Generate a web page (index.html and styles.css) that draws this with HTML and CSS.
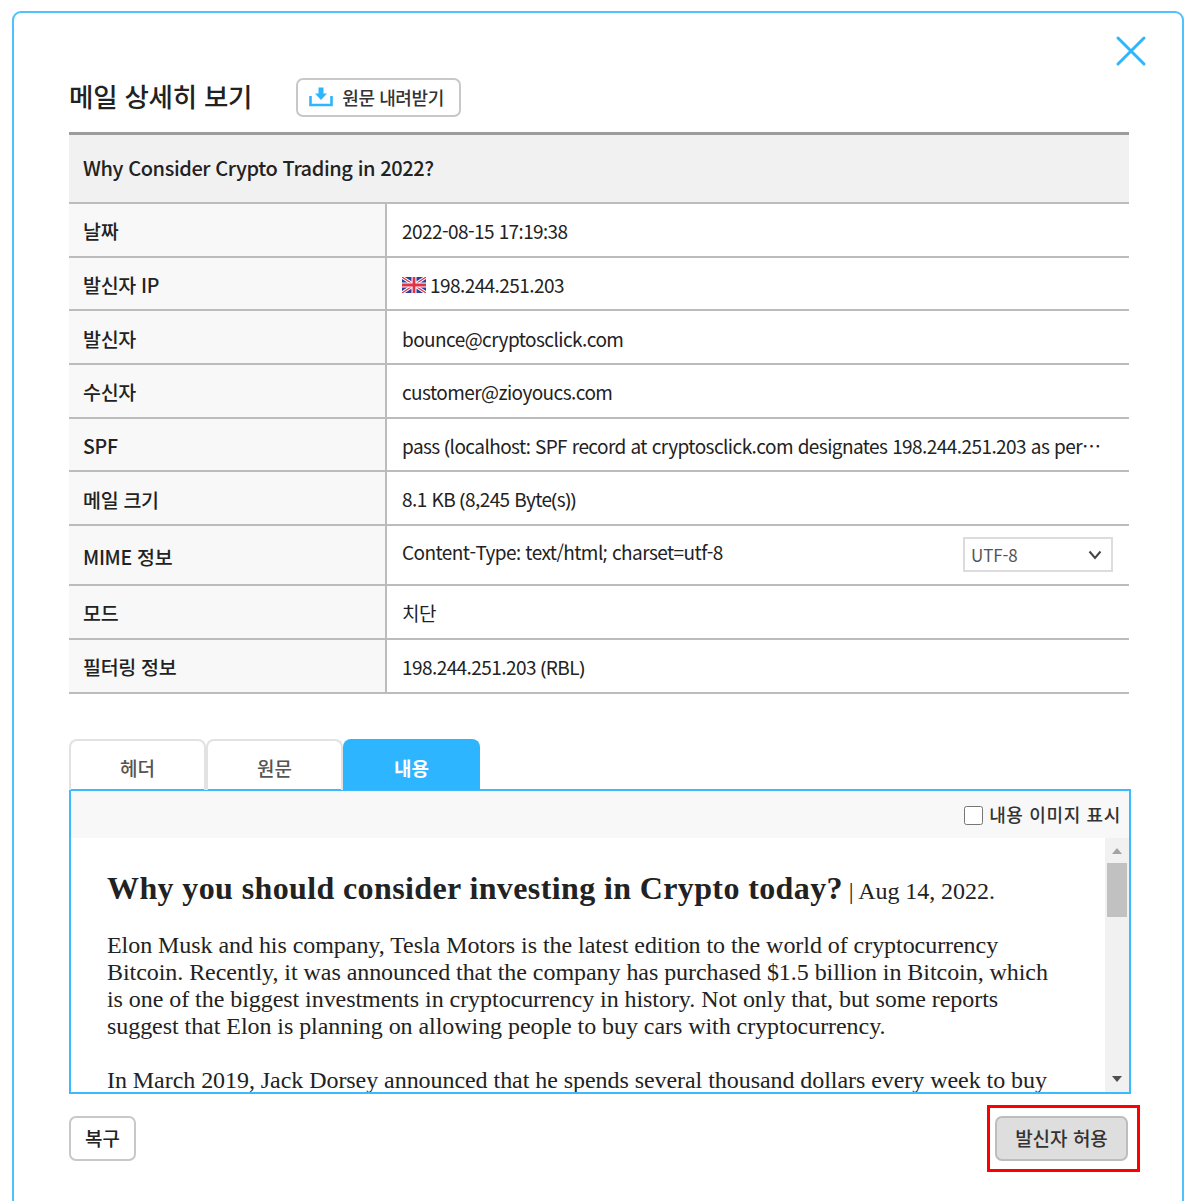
FILE: index.html
```html
<!DOCTYPE html>
<html lang="ko">
<head>
<meta charset="utf-8">
<title>메일 상세히 보기</title>
<link rel="stylesheet" href="styles.css">
</head>
<body>
<div class="dialog">
  <button class="close" aria-label="닫기">
    <svg width="32" height="32" viewBox="0 0 32 32"><path d="M3 3 L29 29 M29 3 L3 29" fill="none" stroke="#2db5ff" stroke-width="3" stroke-linecap="round"/></svg>
  </button>
  <div class="head">
    <h1 class="title">메일 상세히 보기</h1>
    <button class="btn-down">
      <svg width="24" height="20" viewBox="0 0 24 20"><path d="M1.500 9 V18 H22.500 V9" fill="none" stroke="#2db5ff" stroke-width="2.600"/><path d="M9.500 0.500 H14.500 V6.500 H18 L12 13 L6 6.500 H9.500 Z" fill="#2db5ff"/></svg>
      <span>원문 내려받기</span>
    </button>
  </div>
  <div class="info">
    <div class="subject">Why Consider Crypto Trading in 2022?</div>
    <div class="row"><div class="lab">날짜</div><div class="val"><span>2022-08-15 17<span class="pn">:</span>19<span class="pn">:</span>38</span></div></div>
    <div class="row"><div class="lab">발신자 IP</div><div class="val">
      <svg class="flag" width="24" height="16" viewBox="0 0 24 16"><rect width="24" height="16" fill="#2b3f9c"/><path d="M0 0 L24 16 M24 0 L0 16" stroke="#fff" stroke-width="3.200"/><path d="M0 0 L24 16 M24 0 L0 16" stroke="#e0334a" stroke-width="1.200"/><path d="M12 0 V16 M0 8 H24" stroke="#fff" stroke-width="5"/><path d="M12 0 V16 M0 8 H24" stroke="#e0334a" stroke-width="2.800"/></svg>
      198.244.251.203</div></div>
    <div class="row"><div class="lab">발신자</div><div class="val">bounce@cryptosclick.com</div></div>
    <div class="row"><div class="lab">수신자</div><div class="val">customer@zioyoucs.com</div></div>
    <div class="row"><div class="lab">SPF</div><div class="val"><span>pass <span class="pn">(</span>localhost<span class="pn">:</span> SPF record at cryptosclick.com designates 198.244.251.203 as per…</span></div></div>
    <div class="row"><div class="lab">메일 크기</div><div class="val"><span>8.1 KB <span class="pn">(</span>8,245 Byte<span class="pn">(</span>s<span class="pn">))</span></span></div></div>
    <div class="row row-mime"><div class="lab">MIME 정보</div><div class="val val-mime"><span class="mime-text">Content-Type<span class="pn">:</span> text/html<span class="pn">;</span> charset=utf-8</span>
      <div class="select"><span>UTF-8</span><svg width="14" height="10" viewBox="0 0 14 10"><path d="M1.500 1.500 L7 8 L12.500 1.500" fill="none" stroke="#444" stroke-width="2"/></svg></div></div></div>
    <div class="row"><div class="lab">모드</div><div class="val">치단</div></div>
    <div class="row"><div class="lab">필터링 정보</div><div class="val"><span>198.244.251.203 <span class="pn">(</span>RBL<span class="pn">)</span></span></div></div>
  </div>
  <div class="tabs">
    <div class="tab">헤더</div>
    <div class="tab">원문</div>
    <div class="tab tab-on">내용</div>
  </div>
  <div class="panel">
    <div class="panel-bar"><label class="chk"><input type="checkbox"><span>내용 이미지 표시</span></label></div>
    <div class="panel-body">
      <div class="mail">
        <p class="mail-head"><strong>Why you should consider investing in Crypto today?</strong> | Aug 14, 2022.</p>
        <p class="mail-p">Elon Musk and his company, Tesla Motors is the latest edition to the world of cryptocurrency<br>Bitcoin. Recently, it was announced that the company has purchased $1.5 billion in Bitcoin, which<br>is one of the biggest investments in cryptocurrency in history. Not only that, but some reports<br>suggest that Elon is planning on allowing people to buy cars with cryptocurrency.</p>
        <p class="mail-p">In March 2019, Jack Dorsey announced that he spends several thousand dollars every week to buy</p>
      </div>
      <div class="sbar">
        <svg width="12" height="8" viewBox="0 0 12 8"><path d="M1 7 L6 1 L11 7 Z" fill="#a3a3a3"/></svg>
        <div class="sthumb"></div>
        <svg class="sdown" width="12" height="8" viewBox="0 0 12 8"><path d="M1 1 L6 7 L11 1 Z" fill="#505050"/></svg>
      </div>
    </div>
  </div>
  <div class="foot">
    <button class="btn-restore"><span>복구</span></button>
    <div class="mark"><button class="btn-allow"><span>발신자 허용</span></button></div>
  </div>
</div>
</body>
</html>
```
FILE: styles.css
```css
html, body { margin: 0; padding: 0; height: 1201px; overflow: hidden; background: #fff; }
body { font-family: "Noto Sans CJK KR", "Noto Sans", sans-serif; color: #222; }
* { box-sizing: border-box; }
.dialog { position: relative; width: 1172px; height: 1230px; margin: 11px 0 0 12px; border: 2px solid #4fc1ff; border-radius: 9px; padding: 64px 53px 0 55px; background: #fff; }
.close { position: absolute; top: 22px; right: 35px; width: 32px; height: 32px; padding: 0; border: 0; background: none; }
.close svg { display: block; }
.head { display: flex; align-items: center; gap: 44px; height: 40px; margin-bottom: 15px; }
.title { margin: 0 0 2px; font-size: 26.500px; font-weight: 500; letter-spacing: -0.25px; color: #222; line-height: 38px; }
.btn-down { display: flex; align-items: center; gap: 9px; width: 165px; height: 39px; padding: 0 0 1px 11px; border: 2px solid #c8c8c8; border-radius: 7px; background: #fff; font: 500 18px "Noto Sans CJK KR", sans-serif; letter-spacing: -0.4px; color: #333; }
.info { width: 1060px; border-top: 3px solid #9c9c9c; }
.subject { height: 69px; display: flex; align-items: center; padding: 0 14px 2px; background: #f1f1f1; border-bottom: 2px solid #bcbcbc; font-size: 20px; font-weight: 500; letter-spacing: -0.4px; }
.row { display: flex; height: 53.700px; border-bottom: 2px solid #bcbcbc; font-size: 19px; }
.row-mime { height: 60px; }
.lab { width: 318px; flex: none; display: flex; align-items: center; padding: 2px 14px 0; background: #f8f8f8; border-right: 2px solid #bcbcbc; font-size: 19.500px; font-weight: 500; letter-spacing: -0.3px; }
.val { flex: 1; min-width: 0; display: flex; align-items: center; padding: 2px 16px 0 15px; font-family: "Noto Sans CJK JP", "Noto Sans CJK KR", sans-serif; letter-spacing: -0.57px; white-space: nowrap; }
.pn { font-family: "Noto Sans", sans-serif; }
.val-mime { justify-content: space-between; }
.mime-text { margin-top: -9px; }
.flag { margin-right: 4px; flex: none; }
.select { display: flex; align-items: center; justify-content: space-between; width: 150px; height: 35px; margin-top: -3px; padding: 0 9px 0 6px; border: 2px solid #dcdcdc; font-size: 17px; letter-spacing: -0.1px; color: #555; }
.tabs { display: flex; margin-top: 45px; height: 51px; }
.tab { width: 137px; height: 51px; display: flex; align-items: center; justify-content: center; padding-top: 5px; border: 2px solid #e2e2e2; border-bottom: 0; border-radius: 8px 8px 0 0; font-size: 19px; font-weight: 500; color: #555; }
.tab-on { background: #2db5ff; border-color: #2db5ff; color: #fff; font-weight: 700; }
.panel { width: 1062px; height: 305px; border: 2px solid #3db9ff; margin-top: -1px; display: flex; flex-direction: column; }
.panel-bar { height: 47px; background: #f8f8f8; display: flex; justify-content: flex-end; align-items: center; padding-right: 8px; }
.chk { display: flex; align-items: center; gap: 6px; font-size: 18px; font-weight: 500; letter-spacing: 0.65px; color: #333; }
.chk input { width: 19px; height: 19px; margin: 3px 0 0; }
.panel-body { flex: 1; min-height: 0; display: flex; overflow: hidden; }
.mail { flex: 1; min-width: 0; overflow: hidden; padding: 29px 0 0 36px; font-family: "Liberation Serif", serif; color: #222; font-size: 24px; line-height: 27px; letter-spacing: -0.055px; }
.mail p { margin: 0; }
.mail-head { line-height: 42px; white-space: nowrap; margin-bottom: 20px !important; }
.mail-head strong { font-size: 32px; letter-spacing: 0.38px; }
.mail-p { margin-bottom: 27px !important; white-space: nowrap; }
.sbar { position: relative; width: 24px; flex: none; background: #f1f1f1; display: flex; flex-direction: column; align-items: center; padding-top: 9px; }
.sthumb { width: 20px; height: 54px; margin-top: 8px; background: #c1c1c1; }
.sdown { position: absolute; bottom: 9px; left: 6px; }
.foot { display: flex; justify-content: space-between; align-items: center; width: 1059px; margin-top: 22px; }
.btn-restore { width: 67px; height: 45px; padding: 0 0 2px; border: 2px solid #c8c8c8; border-radius: 7px; background: #fff; font: 500 19px "Noto Sans CJK KR", sans-serif; color: #222; }
.mark { position: relative; }
.mark::after { content: ""; position: absolute; inset: -11px -12px -11px -8px; border: 3px solid #f00; pointer-events: none; }
.btn-allow { display: block; width: 133px; height: 45px; padding: 0 0 2px; border: 2px solid #bdbdbd; border-radius: 7px; background: #dedede; font: 500 19px "Noto Sans CJK KR", sans-serif; color: #333; }
```
